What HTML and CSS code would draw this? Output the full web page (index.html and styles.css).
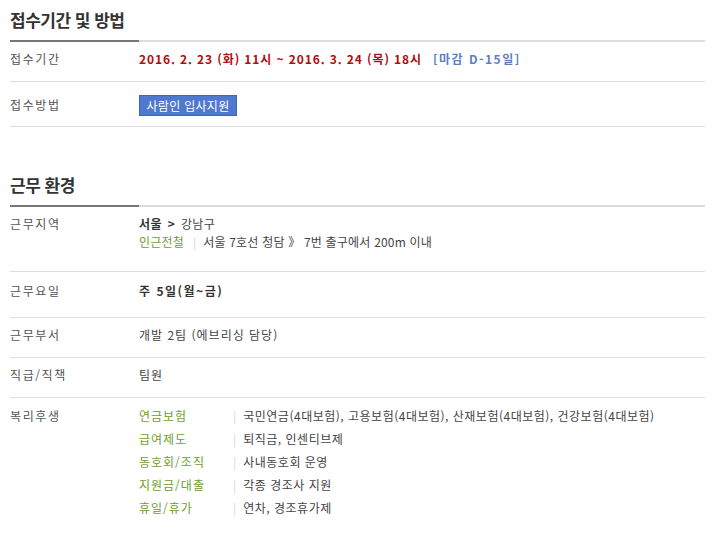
FILE: index.html
```html
<!DOCTYPE html>
<html lang="ko">
<head>
<meta charset="utf-8">
<link rel="stylesheet" href="styles.css">
</head>
<body>
<div class="wrap">
  <section class="sec">
    <h2 class="sec-title">접수기간 및 방법</h2>
    <div class="row">
      <div class="label">접수기간</div>
      <div class="value"><span class="date">2016. 2. 23 (화) 11시 ~ 2016. 3. 24 (목) 18시</span><span class="dday">[마감 D-15일]</span></div>
    </div>
    <div class="row row-btn">
      <div class="label">접수방법</div>
      <div class="value"><span class="btn">사람인 입사지원</span></div>
    </div>
  </section>

  <section class="sec sec2">
    <h2 class="sec-title">근무 환경</h2>
    <div class="row row-loc">
      <div class="label">근무지역</div>
      <div class="value">
        <div><b class="strong">서울</b> <span class="arrow">&gt;</span> 강남구</div>
        <div class="sub"><span class="green">인근전철</span><span class="bar">|</span>서울 7호선 청담 》 7번 출구에서 200m 이내</div>
      </div>
    </div>
    <div class="row row-day">
      <div class="label">근무요일</div>
      <div class="value"><b class="strong wide">주 5일(월~금)</b></div>
    </div>
    <div class="row">
      <div class="label">근무부서</div>
      <div class="value spaced">개발 2팀 (에브리싱 담당)</div>
    </div>
    <div class="row">
      <div class="label">직급/직책</div>
      <div class="value spaced">팀원</div>
    </div>
    <div class="row row-last">
      <div class="label">복리후생</div>
      <div class="value">
        <ul class="benefits">
          <li><span class="bname">연금보험</span><span class="bar">|</span><span>국민연금(4대보험), 고용보험(4대보험), 산재보험(4대보험), 건강보험(4대보험)</span></li>
          <li><span class="bname">급여제도</span><span class="bar">|</span><span>퇴직금, 인센티브제</span></li>
          <li><span class="bname">동호회/조직</span><span class="bar">|</span><span>사내동호회 운영</span></li>
          <li><span class="bname">지원금/대출</span><span class="bar">|</span><span>각종 경조사 지원</span></li>
          <li><span class="bname">휴일/휴가</span><span class="bar">|</span><span>연차, 경조휴가제</span></li>
        </ul>
      </div>
    </div>
  </section>
</div>
</body>
</html>
```

FILE: styles.css
```css
* { box-sizing: border-box; }
body {
  margin: 0;
  background: #fff;
  font-family: "Noto Sans CJK KR", "Noto Sans", sans-serif;
  font-size: 12px;
  color: #333;
}
.wrap {
  margin-left: 10px;
  width: 695px;
}
.sec-title {
  margin: 0;
  position: relative;
  height: 42px;
  line-height: 40px;
  font-size: 17px;
  font-weight: 700;
  color: #333;
  letter-spacing: -0.5px;
  border-bottom: 2px solid #dcdcdc;
}
.sec-title::after {
  content: "";
  position: absolute;
  left: 0;
  bottom: -2px;
  width: 129px;
  height: 2px;
  background: #777;
}
.sec2 { margin-top: 38px; }
.row {
  display: flex;
  padding: 8px 0 13px;
  border-bottom: 1px solid #dddddd;
  line-height: 18px;
}
.label {
  width: 129px;
  flex: none;
  color: #555;
  letter-spacing: 1.6px;
}
.value { flex: 1; color: #444; letter-spacing: 0.4px; }
.value.spaced { letter-spacing: 1px; }
.date {
  color: #b10d0d;
  font-weight: 700;
  letter-spacing: 0.9px;
}
.dday {
  color: #5b7fc2;
  font-weight: 700;
  margin-left: 11px;
  letter-spacing: 1.5px;
}
.row-btn { padding: 13px 0 10px; height: 45px; }
.row-btn .label { padding-top: 1px; }
.btn {
  display: inline-block;
  width: 98px;
  height: 21px;
  line-height: 19px;
  text-align: center;
  background: #4f79cf;
  border: 1px solid #3d65b8;
  color: #fff;
  font-size: 12px;
  letter-spacing: 0.3px;
}
.row-loc { padding: 8px 0 20px; }
.row-loc .sub { letter-spacing: 0.2px; }
.row-day { padding: 10px 0 17px; }
.strong { color: #333; font-weight: 700; }
.wide { letter-spacing: 1.5px; }
.arrow { color: #333; font-weight: 700; margin: 0 2px; }
.green { color: #6f9e32; }
.bar { color: #d6d6d6; margin: 0 7px 0 9px; letter-spacing: 0; }
.row-last { border-bottom: none; padding: 9px 0 12px; }
.benefits {
  list-style: none;
  margin: 0;
  padding: 0;
}
.benefits li {
  display: flex;
  height: 23px;
  line-height: 18px;
  letter-spacing: 0.5px;
}
.bname {
  width: 94px;
  color: #6f9e32;
  flex: none;
  letter-spacing: 1px;
}
.benefits .bar { margin: 0 7px 0 0; }
```
